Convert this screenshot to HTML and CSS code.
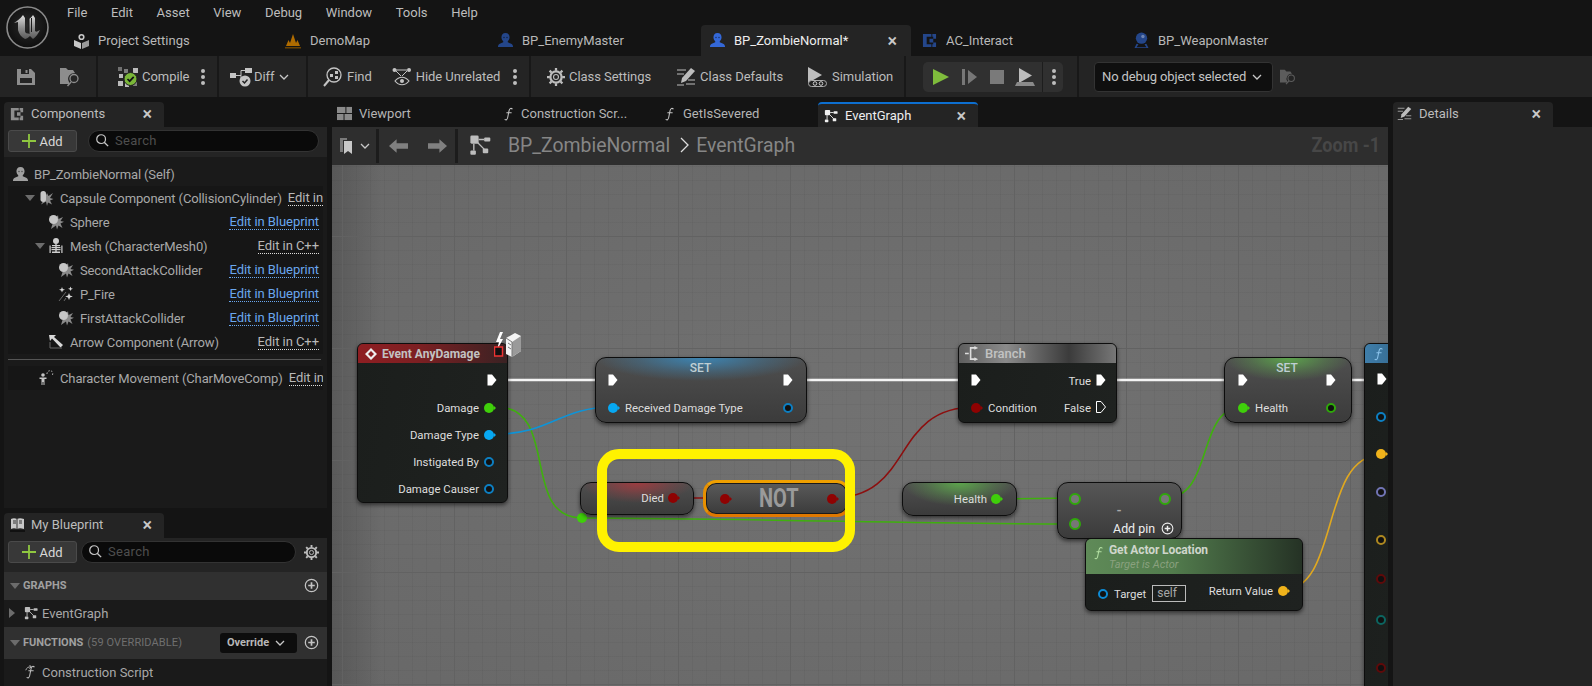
FILE: index.html
```html
<!DOCTYPE html>
<html lang="en">
<head>
<meta charset="utf-8">
<title>BP_ZombieNormal</title>
<link rel="stylesheet" href="styles.css">
</head>
<body>
<svg class="defs" width="0" height="0" aria-hidden="true">
  <defs>
    <linearGradient id="metal" x1="0" y1="0" x2="0" y2="1"><stop offset="0" stop-color="#e0e0e0"/><stop offset=".55" stop-color="#8c8c8c"/><stop offset="1" stop-color="#5a5a5a"/></linearGradient>
    <radialGradient id="logoBg" cx=".5" cy=".45" r=".6"><stop offset="0" stop-color="#2a2a2a"/><stop offset="1" stop-color="#0c0c0c"/></radialGradient>
    <symbol id="zombie" viewBox="0 0 18 18"><path fill="currentColor" d="M9 1c2.900 0 4.300 2 4.300 4.600 0 2-1 3.400-1.900 4.300v1l3.600 1.500c1.300.6 2 1.800 2 3.600H1c0-1.800.7-3 2-3.600l3.600-1.500v-1C5.700 9 4.700 7.600 4.700 5.600 4.700 3 6.100 1 9 1z"/><circle cx="7.400" cy="5.800" r=".8" fill="#0008"/><circle cx="10.600" cy="5.800" r=".8" fill="#0008"/></symbol>
    <symbol id="bpball" viewBox="0 0 18 18"><circle cx="9" cy="6.500" r="6" fill="currentColor"/><circle cx="10.500" cy="4.800" r="1.800" fill="#fff5"/><path fill="currentColor" d="M3.800 12.500l2 .6-2 3h10.400l-2-3 2-.6 2.200 4.500H1.600z"/></symbol>
    <symbol id="cicon" viewBox="0 0 16 16"><path fill="currentColor" d="M1 1h9v3H5v8h5v3H1zM11 1h4v5h-3V4h-1zM11 12h1v-2h3v5h-4zM8 6h4v4H8z"/></symbol>
    <symbol id="puff" viewBox="0 0 16 16"><path fill="#8a8a8a" d="M10 1l.5 4L15 3l-2.500 4 3.500.8-3.500 1.700 2 4.500-4-2.500-1.500 4L8 11.500 3 15l1.500-5z"/><circle cx="5.500" cy="5.500" r="4.500" fill="#c6c6c6"/></symbol>
    <symbol id="capsule" viewBox="0 0 16 16"><path fill="#8a8a8a" d="M9 3l1.500 3 4.500-3-3 5 3.500 1-3.500 1.500 2 4-4-2L9 16l-1-4.500-5 3 3-5z"/><rect x="2.500" y="1" width="5.500" height="11" rx="2.700" fill="#c6c6c6"/></symbol>
    <symbol id="skel" viewBox="0 0 16 16"><g fill="#cfcfcf"><circle cx="8" cy="3" r="3"/><rect x="4" y="7" width="8" height="1.200"/><rect x="3.500" y="9" width="9" height="1.200"/><rect x="3.500" y="11" width="9" height="1.200"/><rect x="7.300" y="6" width="1.400" height="9"/><rect x="1.500" y="7.500" width="1.200" height="7.500"/><rect x="13.300" y="7.500" width="1.200" height="7.500"/><rect x="4" y="13.500" width="8" height="1.500"/></g></symbol>
    <symbol id="spark" viewBox="0 0 16 16"><g fill="#d8d8d8"><path d="M4 1l.8 2L7 3.700 4.800 4.500 4 6.500l-.8-2L1 3.700l2.200-.7zM12.500 .5l.7 1.700 1.800.6-1.800.6-.7 1.700-.7-1.700-1.800-.6 1.800-.6zM11 7l1 2.600 2.800.9-2.800 1-1 2.500-1-2.500-2.800-1 2.800-.9z"/></g><path stroke="#666" stroke-width="1" fill="none" d="M1 15L8 6M6 15l2-3"/></symbol>
    <symbol id="arrowc" viewBox="0 0 16 16"><path fill="#d8d8d8" d="M1 1h7L6 3l9 8-2.500 2.500-8.500-9L2 7z"/><path fill="none" stroke="#666" d="M2 8v6h12"/></symbol>
    <symbol id="charm" viewBox="0 0 16 16"><g fill="#c4c4c4"><circle cx="5" cy="5" r="1.800"/><path d="M1.500 7.500h7v1.500H6.500v6H5.500v-3h-1v3h-1V9h-2z"/></g><path fill="none" stroke="#c4c4c4" stroke-dasharray="1.500 1.500" d="M9 4a3 3 0 0 1 5-2.500 3 3 0 0 1 0 4"/></symbol>
    <symbol id="graph" viewBox="0 0 16 16"><g fill="currentColor"><rect x="1" y="1" width="6" height="6" rx="1"/><rect x="11" y="2.500" width="4.500" height="3" rx=".7"/><rect x="1" y="12" width="4" height="3" rx=".7"/><rect x="10" y="10.500" width="4" height="3.500" rx=".7"/></g><path stroke="currentColor" fill="none" d="M7 4h4M3.500 7v5M6 6l5 5"/></symbol>
    <symbol id="search" viewBox="0 0 16 16"><circle cx="7" cy="7" r="5" fill="none" stroke="currentColor" stroke-width="1.400"/><path stroke="currentColor" stroke-width="1.600" d="M10.500 10.500L15 15"/></symbol>
    <symbol id="pluscircle" viewBox="0 0 16 16"><circle cx="8" cy="8" r="6.600" fill="none" stroke="currentColor" stroke-width="1.300"/><path stroke="currentColor" stroke-width="1.800" d="M4.500 8h7M8 4.500v7"/></symbol>
    <symbol id="gear" viewBox="0 0 16 16"><circle cx="8" cy="8" r="5" fill="none" stroke="currentColor" stroke-width="2"/><circle cx="8" cy="8" r="2.200" fill="none" stroke="currentColor"/><path stroke="currentColor" stroke-width="2" d="M8 0v2.500M8 13.500V16M0 8h2.500M13.500 8H16M2.300 2.300L4 4M12 12l1.700 1.700M2.300 13.700L4 12M12 4l1.700-1.700"/></symbol>
    <symbol id="folderfind" viewBox="0 0 20 20"><path fill="currentColor" d="M0 1h6l2 2h5l2 3a6 6 0 0 0-6 9 4 4 0 0 0 .5 2H0z"/><circle cx="14" cy="11.500" r="4" fill="none" stroke="currentColor" stroke-width="1.300"/><path stroke="currentColor" stroke-width="1.500" d="M11 15l-3.500 4"/></symbol>
    <symbol id="chev" viewBox="0 0 10 6"><path fill="none" stroke="currentColor" stroke-width="1.300" d="M1 1l4 4 4-4"/></symbol>
    <symbol id="edit" viewBox="0 0 20 20"><path fill="currentColor" d="M15 1l4 3-9 10-5 2 1-5z"/><path stroke="currentColor" d="M1 3h9M1 7h7M10 17h9M12 13h7M1 18h7"/></symbol>
    <symbol id="book" viewBox="0 0 16 16"><path fill="#c8c8c8" d="M1 2c2-1 4-1 6 0 2-1 4-1 7 0v10c-3-1-5-1-7 0-2-1-4-1-6 0z"/><path stroke="#333" d="M7 2v10M3 4h3M3 6h3M9 4h3M9 6h3"/><path fill="#111" d="M0 13h15v2H0z"/></symbol>
    <symbol id="fn" viewBox="0 0 14 16"><path fill="none" stroke="currentColor" stroke-width="1.200" d="M11 2.500C9 .5 7.500 2 7 4.500L5.500 12C5 14.500 3.500 15.500 2 14M4 6.500h6"/></symbol>
    <symbol id="exec" viewBox="0 0 10 12"><path fill="#fff" d="M.5.500h4.500l4.500 5.500-4.500 5.500H.500z"/></symbol>
    <symbol id="execoff" viewBox="0 0 10 12"><path fill="none" stroke="#fff" d="M.5.500h4.500l4.500 5.500-4.500 5.500H.500z"/></symbol>
  </defs>
</svg>

<header class="titlebar">
  <div class="logo">
    <svg viewBox="0 0 54 54" width="54" height="54">
      <circle cx="27.500" cy="27.500" r="20.500" fill="url(#logoBg)" stroke="#8a8a8a" stroke-width="1.600"/>
      <path fill="url(#metal)" d="M14 23c3-2 6-4 9-8l2 3v13c0 2 2 3 4 2V19c1-1 3-2 4-4l2 3v13c1 1 2 1 3 0l2-1c-2 4-4 7-7 9l-3-3c-2 2-4 3-5 3-4-2-6-5-7-9v-8z"/>
      <path stroke="#1c1c1c" stroke-width="1" fill="none" d="M29 18v16M31.500 18v14"/>
    </svg>
  </div>
  <div class="titlecol">
    <nav class="menu">
      <span>File</span><span>Edit</span><span>Asset</span><span>View</span><span>Debug</span><span>Window</span><span>Tools</span><span>Help</span>
    </nav>
    <div class="doctabs">
      <div class="doctab dt1">
        <svg class="ic16" viewBox="0 0 16 16"><circle cx="8.500" cy="4" r="2.300" fill="none" stroke="#c8c8c8" stroke-width="1.600"/><path fill="#c8c8c8" d="M1 7l7 3v6l-7-3z"/><path fill="#999" d="M16 7l-7 3v6l7-3z"/></svg>
        <span>Project Settings</span>
      </div>
      <div class="doctab dt2">
        <svg class="ic16" viewBox="0 0 16 16"><path fill="#b06c00" d="M1 13l2.500-6 1.500 3 3-9 3 9 1.500-3 2.500 6z"/><rect x="0" y="14" width="16" height="1.500" fill="#6b4300"/></svg>
        <span>DemoMap</span>
      </div>
      <div class="doctab dt3">
        <svg class="ic17 zombie-dim"><use href="#zombie"/></svg>
        <span>BP_EnemyMaster</span>
      </div>
      <div class="doctab dt4 active">
        <svg class="ic17 zombie-bright"><use href="#zombie"/></svg>
        <span class="dtname">BP_ZombieNormal*</span>
        <span class="close">×</span>
      </div>
      <div class="doctab dt5">
        <svg class="ic15 zombie-dim"><use href="#cicon"/></svg>
        <span>AC_Interact</span>
      </div>
      <div class="doctab dt6">
        <svg class="ic17 zombie-dim"><use href="#bpball"/></svg>
        <span>BP_WeaponMaster</span>
      </div>
    </div>
  </div>
</header>

<div class="toolbar">
  <div class="tg tg1">
    <svg class="ic18 tool-ic" viewBox="0 0 18 18"><path fill="currentColor" d="M0 1h14l4 4v12H0z"/><rect x="4" y="1" width="8" height="5" fill="#242424"/><rect x="8.500" y="2" width="2" height="3" fill="currentColor"/><rect x="3" y="10" width="12" height="5" fill="#242424"/></svg>
    <svg class="ic20 tool-ic"><use href="#folderfind"/></svg>
  </div>
  <div class="tg tg2">
    <div class="tb">
      <svg class="ic20" viewBox="0 0 20 20"><g fill="#bbb"><rect x="0" y="0" width="4" height="4" opacity=".5"/><rect x="6" y="2" width="4" height="4" opacity=".6"/><rect x="15" y="1" width="5" height="5"/><rect x="1" y="7" width="4" height="4"/><rect x="0" y="14" width="5" height="5"/><rect x="7" y="15" width="4" height="5"/><rect x="15" y="15" width="4" height="4" opacity=".6"/></g><circle cx="12.500" cy="12" r="6.500" fill="#7ab738" stroke="#222" stroke-width="1"/><path fill="none" stroke="#111" stroke-width="1.700" d="M9.500 12l2.200 2.200 4-4.300"/></svg>
      <span>Compile</span>
    </div>
    <i class="kebab"></i>
  </div>
  <div class="tg tg3">
    <div class="tb diff">
      <svg class="ic24" viewBox="0 0 24 20"><rect x="0" y="6" width="6" height="5" fill="#c4c4c4"/><rect x="15" y="1" width="7" height="5" fill="#c4c4c4"/><path stroke="#c4c4c4" fill="none" d="M6 8.500h5V3.500h4M11 8.500v3"/><circle cx="15" cy="14" r="5.500" fill="#c4c4c4"/><path fill="none" stroke="#222" stroke-width="1.500" d="M12.500 14l2 2 3-3.500"/></svg>
      <span>Diff</span>
      <svg class="chev"><use href="#chev"/></svg>
    </div>
  </div>
  <div class="tg tg4">
    <div class="tb">
      <svg class="ic20" viewBox="0 0 20 20"><circle cx="11" cy="8" r="7" fill="none" stroke="#c4c4c4" stroke-width="1.300"/><path stroke="#c4c4c4" stroke-width="2" d="M6 13l-5 6"/><rect x="7" y="7" width="3" height="3" fill="#c4c4c4"/><rect x="12" y="4" width="3" height="3" fill="#c4c4c4"/><rect x="12" y="9" width="3" height="3" fill="#c4c4c4"/></svg>
      <span>Find</span>
    </div>
    <div class="tb">
      <svg class="ic20" viewBox="0 0 20 20"><circle cx="2.500" cy="3" r="2" fill="#c4c4c4"/><circle cx="17" cy="3" r="2" fill="#c4c4c4"/><path stroke="#c4c4c4" d="M4 3h11M4 4l5 5M15 4l-5 5"/><path fill="none" stroke="#c4c4c4" stroke-width="1.200" d="M3 14c4-5 10-5 14 0-4 5-10 5-14 0z"/><circle cx="10" cy="14" r="2" fill="#c4c4c4"/></svg>
      <span>Hide Unrelated</span>
    </div>
    <i class="kebab"></i>
  </div>
  <div class="tg tg5">
    <div class="tb">
      <svg class="ic18 tool-lt"><use href="#gear"/></svg>
      <span>Class Settings</span>
    </div>
    <div class="tb">
      <svg class="ic20 tool-lt"><use href="#edit"/></svg>
      <span>Class Defaults</span>
    </div>
    <div class="tb">
      <svg class="ic20" viewBox="0 0 20 20"><path fill="#bdbdbd" d="M0 0l14 8-14 8z"/><rect x=".5" y="13.500" width="18" height="6" rx="3" fill="#222" stroke="#aaa"/><circle cx="7" cy="16.500" r="1.800" fill="none" stroke="#ccc"/><circle cx="13" cy="16.500" r="1.800" fill="none" stroke="#ccc"/></svg>
      <span>Simulation</span>
    </div>
  </div>
  <div class="tg tg6">
    <div class="playbox">
      <svg class="ic-play" viewBox="0 0 16 16"><path fill="#7fbc3c" d="M0 0l16 8-16 8z"/></svg>
      <svg class="ic-step" viewBox="0 0 15 16"><rect width="3" height="16" fill="#777"/><path fill="#777" d="M6 1l9 7-9 7z"/></svg>
      <span class="stop"></span>
      <svg class="ic-eject" viewBox="0 0 20 18"><path fill="#bdbdbd" d="M4 0l13 7.500L4 15z"/><path fill="#8a8a8a" d="M2 14h16l2 4H0z"/></svg>
      <span class="pdiv"></span>
      <i class="kebab"></i>
    </div>
  </div>
  <div class="tg tg7">
    <div class="debugsel"><span>No debug object selected</span><svg class="chev"><use href="#chev"/></svg></div>
    <svg class="ic16 tool-dim"><use href="#folderfind"/></svg>
  </div>
</div>

<main class="workspace">
  <aside class="leftcol">
    <section class="panel comp-panel">
      <div class="paneltab comp-tab">
        <svg class="ic14 tool-ic"><use href="#cicon"/></svg>
        <span class="pt-label">Components</span>
        <span class="close">×</span>
      </div>
      <div class="panelbody">
        <div class="searchrow comp-search">
          <button class="addbtn"><svg class="plus" viewBox="0 0 14 14"><path stroke="#8fc740" stroke-width="1.800" d="M7 0v14M0 7h14"/></svg>Add</button>
          <div class="searchbox"><svg class="ic14"><use href="#search"/></svg><span>Search</span></div>
        </div>
        <div class="tree">
          <div class="trow self">
            <svg class="ic17 selficon"><use href="#zombie"/></svg><span>BP_ZombieNormal (Self)</span>
          </div>
          <div class="trow"><i class="tri d1"></i><svg class="ic16"><use href="#capsule"/></svg><span class="tname">Capsule Component (CollisionCylinder)</span><a class="lk wt cut">Edit in</a></div>
          <div class="trow"><span class="ind2"></span><svg class="ic16"><use href="#puff"/></svg><span class="tname">Sphere</span><a class="lk bl">Edit in Blueprint</a></div>
          <div class="trow"><i class="tri d2"></i><svg class="ic16"><use href="#skel"/></svg><span class="tname">Mesh (CharacterMesh0)</span><a class="lk wt">Edit in C++</a></div>
          <div class="trow"><span class="ind3"></span><svg class="ic16"><use href="#puff"/></svg><span class="tname">SecondAttackCollider</span><a class="lk bl">Edit in Blueprint</a></div>
          <div class="trow"><span class="ind3"></span><svg class="ic16"><use href="#spark"/></svg><span class="tname">P_Fire</span><a class="lk bl">Edit in Blueprint</a></div>
          <div class="trow"><span class="ind3"></span><svg class="ic16"><use href="#puff"/></svg><span class="tname">FirstAttackCollider</span><a class="lk bl">Edit in Blueprint</a></div>
          <div class="trow"><span class="ind2"></span><svg class="ic16"><use href="#arrowc"/></svg><span class="tname">Arrow Component (Arrow)</span><a class="lk wt">Edit in C++</a></div>
          <div class="tdivider"></div>
          <div class="trow"><span class="ind1"></span><svg class="ic16"><use href="#charm"/></svg><span class="tname">Character Movement (CharMoveComp)</span><a class="lk wt cut">Edit in</a></div>
        </div>
      </div>
    </section>
    <section class="panel bp-panel">
      <div class="paneltab bp-tab">
        <svg class="ic16"><use href="#book"/></svg>
        <span class="pt-label">My Blueprint</span>
        <span class="close">×</span>
      </div>
      <div class="panelbody">
        <div class="searchrow bp-search">
          <button class="addbtn"><svg class="plus" viewBox="0 0 14 14"><path stroke="#8fc740" stroke-width="1.800" d="M7 0v14M0 7h14"/></svg>Add</button>
          <div class="searchbox sb2"><svg class="ic14"><use href="#search"/></svg><span>Search</span></div>
          <svg class="ic15 tool-lt gearbtn"><use href="#gear"/></svg>
        </div>
        <div class="secbar sb-graphs"><i class="tri sec"></i><b>GRAPHS</b><svg class="ic15 secplus"><use href="#pluscircle"/></svg></div>
        <div class="bprow br-graph"><i class="tri-r"></i><svg class="ic14 tool-lt"><use href="#graph"/></svg><span>EventGraph</span></div>
        <div class="secbar sb-func"><i class="tri sec"></i><b>FUNCTIONS</b><em>(59 OVERRIDABLE)</em><span class="override">Override<svg class="chev"><use href="#chev"/></svg></span><svg class="ic15 secplus"><use href="#pluscircle"/></svg></div>
        <div class="bprow br-cs"><svg class="ic14 tool-lt" viewBox="0 0 14 16"><use href="#fn"/><path stroke="currentColor" fill="none" d="M1 6c1-3 3-4 6-4M5 0l2.500 2L5 4"/></svg><span>Construction Script</span></div>
      </div>
    </section>
  </aside>

  <section class="center">
    <div class="gtabs">
      <div class="gtab gt1"><svg class="ic15" viewBox="0 0 16 16"><g fill="#8a8a8a"><rect x="0" y="1" width="9" height="6.500"/><rect x="10" y="1" width="6" height="6.500"/><rect x="0" y="8.500" width="7" height="6.500"/><rect x="8" y="8.500" width="8" height="6.500"/></g></svg><span>Viewport</span></div>
      <div class="gtab gt2"><svg class="ic14 fnic"><use href="#fn"/></svg><span>Construction Scr...</span></div>
      <div class="gtab gt3"><svg class="ic14 fnic"><use href="#fn"/></svg><span>GetIsSevered</span></div>
      <div class="gtab gt4 active"><svg class="ic14 white"><use href="#graph"/></svg><span class="gname">EventGraph</span><span class="close">×</span></div>
    </div>
    <div class="ghead">
      <div class="gh-book">
        <svg class="ic-book" viewBox="0 0 13 16"><path fill="#7a7a7a" d="M0 0h7v2H3v12H0z"/><path fill="#c8c8c8" d="M4 3h8v13l-4-3-4 3z"/></svg>
        <svg class="chev"><use href="#chev"/></svg>
      </div>
      <div class="gh-nav">
        <svg class="ic-arr" viewBox="0 0 20 14"><path fill="#808080" d="M0 7l8-7v4h12v6H8v4z"/></svg>
        <svg class="ic-arr" viewBox="0 0 20 14"><path fill="#808080" d="M20 7l-8-7v4H0v6h12v4z"/></svg>
      </div>
      <div class="gh-crumbs">
        <svg class="ic22"><use href="#graph"/></svg>
        <span class="crumb">BP_ZombieNormal</span>
        <svg class="crumb-sep" viewBox="0 0 9 16"><path fill="none" stroke="#ddd" stroke-width="1.300" d="M1 1l7 7-7 7"/></svg>
        <span class="crumb">EventGraph</span>
      </div>
      <span class="zoomlbl">Zoom -1</span>
    </div>
    <div class="canvas">
      <svg class="wires" viewBox="332 165 1056 521" width="1056" height="521">
        <g fill="none" stroke-width="2">
          <path class="w-exec" d="M497 380H610M790 380H975M1100 380H1240M1332 380H1382"/>
          <path class="w-green" d="M497 407C560 407 520 518 582 518"/>
          <path class="w-blue" d="M497 434C550 434 560 407 613 407"/>
          <path class="w-green w-thin" d="M582 518C800 519 900 524 1074 524"/>
          <path class="w-red" d="M673 498H723"/>
          <path class="w-red" d="M832 498C915 498 890 407 975 407"/>
          <path class="w-green" d="M996 499L1074 498"/>
          <path class="w-green" d="M1165 498C1215 498 1195 407 1243 407"/>
          <path class="w-gold" d="M1283 590C1340 590 1320 455 1381 455"/>
        </g>
      </svg>

      <div class="node impure n-event">
        <div class="nhead nh-red"><svg class="ev-ic" viewBox="0 0 12 12"><path fill="#eee" d="M6 0l6 6-6 6-6-6zM6 3L3 6l3 3 3-3z"/></svg>Event AnyDamage</div>
        <div class="nbody">
          <div class="nrow re exrow"><svg class="exec"><use href="#exec"/></svg></div>
          <div class="nrow re"><span>Damage</span><i class="pin green"></i></div>
          <div class="nrow re"><span>Damage Type</span><i class="pin blue"></i></div>
          <div class="nrow re"><span>Instigated By</span><i class="pin ring r-blue"></i></div>
          <div class="nrow re"><span>Damage Causer</span><i class="pin ring r-blue"></i></div>
        </div>
      </div>
      <div class="knot"></div>
      <svg class="cube" viewBox="0 0 28 30">
        <path fill="#fff" d="M6 0L2 10h3l-2 8 6-11H6l3-7z"/>
        <path fill="#f4f4f4" d="M12 6l9-5 6 3v15l-9 6-6-3z"/>
        <path fill="#9a9a9a" d="M18 10l9-6v15l-9 6z"/>
        <path stroke="#777" fill="none" d="M12 6l6 4v15M14 11l3 2M14 15l3 2"/>
        <rect x="0.500" y="15" width="8" height="9" fill="#111" stroke="#e33" stroke-width="1.500"/>
      </svg>

      <div class="node pure n-set1 glow-blue">
        <div class="nrow sb"><svg class="exec"><use href="#exec"/></svg><span class="nodetitle">SET</span><svg class="exec"><use href="#exec"/></svg></div>
        <div class="nrow sb"><span class="pinl"><i class="pin blue"></i><span>Received Damage Type</span></span><i class="pin ring r-blue"></i></div>
      </div>

      <div class="node pure n-died glow-red"><div class="nrow re"><span>Died</span><i class="pin red"></i></div></div>

      <div class="node pure n-not">
        <i class="pin red"></i><span class="nottxt">NOT</span><i class="pin red"></i>
      </div>

      <div class="node impure n-branch">
        <div class="nhead nh-grey"><svg class="ic15" viewBox="0 0 16 16"><path stroke="#ddd" stroke-width="1.700" fill="none" d="M0 8h4M11 2H6v12h5"/><path fill="#ddd" d="M10 0l4 2-4 2zM10 12l4 2-4 2z"/></svg>Branch</div>
        <div class="nbody">
          <div class="nrow sb"><svg class="exec"><use href="#exec"/></svg><span class="rr"><span>True</span><svg class="exec"><use href="#exec"/></svg></span></div>
          <div class="nrow sb"><span class="pinl"><i class="pin red"></i><span>Condition</span></span><span class="rr"><span>False</span><svg class="exec"><use href="#execoff"/></svg></span></div>
        </div>
      </div>

      <div class="node pure n-set2 glow-green">
        <div class="nrow sb"><svg class="exec"><use href="#exec"/></svg><span class="nodetitle">SET</span><svg class="exec"><use href="#exec"/></svg></div>
        <div class="nrow sb"><span class="pinl"><i class="pin green"></i><span>Health</span></span><i class="pin ring r-green"></i></div>
      </div>

      <div class="node pure n-health glow-green"><div class="nrow re"><span>Health</span><i class="pin green"></i></div></div>

      <div class="node pure n-minus">
        <div class="mrow"><i class="pin gring"></i><i class="pin gring"></i></div>
        <div class="mdash">-</div>
        <div class="mrow m3"><i class="pin gring"></i><span class="addpin">Add pin<svg class="ic13"><use href="#pluscircle"/></svg></span></div>
      </div>

      <div class="node impure n-gal">
        <div class="nhead nh-green">
          <svg class="fn-green"><use href="#fn"/></svg>
          <div><div class="galtitle">Get Actor Location</div><div class="galsub">Target is Actor</div></div>
        </div>
        <div class="galbody">
          <span class="pinl"><i class="pin ring r-blue2"></i><span>Target</span><span class="selfbox">self</span></span>
          <span class="rr retv"><span>Return Value</span><i class="pin gold"></i></span>
        </div>
      </div>

      <div class="node impure n-fn">
        <div class="nhead nh-blue"><svg class="fn-blue"><use href="#fn"/></svg></div>
        <div class="fnpins">
          <svg class="exec"><use href="#exec"/></svg>
          <i class="pin ring r-blue g1"></i>
          <i class="pin gold g2"></i>
          <i class="pin ring r-purple g7"></i>
          <i class="pin ring r-gold g3"></i>
          <i class="pin ring r-red g6"></i>
          <i class="pin ring r-teal g4"></i>
          <i class="pin ring r-red g5"></i>
        </div>
      </div>

      <div class="highlight"></div>
    </div>
  </section>

  <aside class="rightcol">
    <div class="paneltab det-tab">
      <svg class="ic15 tool-lt"><use href="#edit"/></svg>
      <span class="pt-label">Details</span>
      <span class="close">×</span>
    </div>
    <div class="panelbody det-body"></div>
  </aside>
</main>
</body>
</html>
```
FILE: styles.css
```css
*{box-sizing:border-box}
html,body{margin:0;height:100%}
body{width:1592px;height:686px;overflow:hidden;background:#141414;font-family:Roboto,"Liberation Sans",sans-serif;font-size:13px;color:#c0c0c0;display:flex;flex-direction:column}
.defs{position:absolute}
svg{display:block;flex:none}
.ic13{width:13px;height:13px}.ic14{width:14px;height:14px}.ic15{width:15px;height:15px}.ic16{width:16px;height:16px}.ic17{width:17px;height:17px}.ic18{width:18px;height:18px}.ic20{width:20px;height:20px}.ic22{width:22px;height:22px}.ic24{width:24px;height:20px}
.close{font-size:18px;line-height:1;font-weight:500;color:#c8c8c8}

/* title bar */
.titlebar{display:flex;height:56px;flex:none;background:#141414}
.logo{width:60px;flex:none}
.titlecol{flex:1;display:flex;flex-direction:column}
.menu{display:flex;height:25px;align-items:center;padding-left:7px}
.menu span{margin-right:23.6px;color:#bdbdbd}
.doctabs{display:flex;height:31px}
.doctab{display:flex;align-items:center;gap:9px;padding-left:13px;height:31px;color:#b8b8b8}
.dt1{width:212px}.dt2{width:212px}.dt3{width:217px;gap:8px}.dt4{width:210px;padding-left:8px;gap:8px}.dt5{width:211px;padding-left:11px}.dt6{width:200px;padding-left:11px;gap:8px}
.doctab.active{background:#242424;border-radius:4px 4px 0 0;color:#eee;padding-right:14px}
.dtname{flex:1}
.zombie-dim{color:#24468a}
.zombie-bright{color:#3468d8}

/* toolbar */
.toolbar{display:flex;height:41px;flex:none;background:#242424;align-items:center}
.tg{display:flex;align-items:center;height:41px;border-right:2px solid #181818;flex:none}
.tg1{width:98px;padding-left:17px;gap:25px}
.tool-ic{color:#8d8d8d}
.tool-lt{color:#bdbdbd}
.tool-dim{color:#5c5c5c}
.tg2{width:121px;padding-left:20px;gap:12px}
.tg3{width:89px;padding-left:11px}
.tg4{width:223px;padding-left:15px;gap:20px}
.tg4 .kebab{margin-left:-7px}
.tg5{width:375px;padding-left:16px;gap:25px}
.tg6{width:173px;padding-left:17px;padding-right:14px}
.tg7{border-right:0;padding-left:15px;gap:7px}
.tb{display:flex;align-items:center;gap:4px;color:#bcbcbc;letter-spacing:-.05px}
.diff{gap:0}
.chev{width:10px;height:6px;color:#c8c8c8}
.diff .chev{margin-left:4px}
.kebab{display:block;width:4px;height:4px;border-radius:50%;background:#bdbdbd;box-shadow:0 -6px 0 #bdbdbd,0 6px 0 #bdbdbd;flex:none}
.playbox{display:flex;align-items:center;height:30px;width:140px;background:#303030;border-radius:5px;padding-left:10px}
.ic-play{width:16px;height:16px}
.ic-step{width:15px;height:16px;margin-left:13px}
.stop{width:14px;height:14px;background:#7a7a7a;margin-left:13px;flex:none}
.ic-eject{width:20px;height:18px;margin-left:11px}
.pdiv{width:1px;height:30px;background:#1d1d1d;margin-left:7px}
.playbox .kebab{margin-left:9px}
.debugsel{display:flex;align-items:center;height:30px;width:179px;background:#0f0f0f;border:1px solid #333;border-radius:4px;padding-left:7px;gap:6px;color:#c4c4c4;letter-spacing:-.12px}

/* workspace */
.workspace{flex:1;display:flex;min-height:0}
.leftcol{width:323px;margin-left:4px;margin-right:5px;display:flex;flex-direction:column;flex:none}
.panel{display:flex;flex-direction:column;padding-top:5px}
.comp-panel{height:411px}
.bp-panel{flex:1;min-height:0;overflow:hidden}
.paneltab{height:25px;background:#242424;border-radius:4px 4px 0 0;display:flex;align-items:center;padding:0 12px 2px 6px;flex:none}
.comp-tab{width:160px}
.bp-tab{width:160px}
.bp-tab .pt-label{margin-left:5px}
.pt-label{flex:1;margin-left:7px;color:#bcbcbc}
.panelbody{flex:1;background:#242424;min-height:0}
.searchrow{display:flex;align-items:flex-start;padding:3px 0 0 4px;height:30px}
.addbtn{display:flex;align-items:center;gap:3px;justify-content:center;height:22px;width:69px;background:#383838;border:1px solid #4a4a4a;border-radius:3px;color:#d8d8d8;font:13px Roboto,sans-serif;padding:0}
.plus{width:14px;height:14px}
.searchbox{display:flex;align-items:center;gap:6px;height:22px;margin-left:11px;width:231px;background:#0a0a0a;border:1px solid #333;border-radius:11px;padding:0 0 2px 6px;color:#c8c8c8}
.searchbox span{color:#4e4e4e;letter-spacing:.3px}
.sb2{margin-left:4px;width:215px}
.gearbtn{margin:4px 0 0 8px;width:15px;height:15px}

.tree{background:#1a1a1a;height:351px;padding:0 4px;overflow:hidden}
.trow{display:flex;align-items:center;height:24px;width:315px;background:#161616;white-space:nowrap;overflow:hidden;color:#a8a8a8;letter-spacing:-.12px}
.trow.self{background:none;margin-top:5px;padding-left:4px}
.trow.self span{margin-left:5px}
.selficon{color:#a0a0a0}
.tname{margin-left:6px;flex:1}
.tri{width:0;height:0;border-left:5px solid transparent;border-right:5px solid transparent;border-top:6px solid #6c6c6c;flex:none}
.tri.d1{margin-left:17px;margin-right:3px}
.tri.d2{margin-left:27px;margin-right:3px}
.ind1{width:30px;flex:none}.ind2{width:40px;flex:none}.ind3{width:50px;flex:none}
.lk{flex:none;border-bottom:1px dotted;margin-right:4px;line-height:14px;letter-spacing:-.05px}
.lk.bl{color:#6aa7ee;border-color:#6aa7ee}
.lk.wt{color:#b8b8b8;border-color:#ddd}
.cut{margin-left:6px;margin-right:0}
.tdivider{height:1px;background:#555;margin:5px 1px 6px 0;width:313px}

.secbar{display:flex;align-items:center;background:#303030;padding:0 0 1px 6px;color:#aaa;font-size:11px}
.secbar b{font-weight:700;margin-left:3px;color:#a0a0a0}
.secbar em{font-style:normal;margin-left:4px;color:#6f6f6f;letter-spacing:.1px}
.sb-graphs{height:28px;margin-top:4px}
.sb-func{height:32px}
.secplus{margin-left:auto;margin-right:8px;color:#c4c4c4}
.override{display:flex;align-items:center;gap:6px;height:20px;width:77px;padding-left:7px;background:#0d0d0d;border-radius:3px;margin-left:auto;color:#b8b8b8;font-weight:700;font-size:11px}
.sb-func .secplus{margin-left:7px}
.bprow{display:flex;align-items:center;background:#1a1a1a;color:#a8a8a8;gap:4px;height:27px;padding-bottom:1px}
.br-graph{padding-left:5px}
.br-cs{padding-left:20px}
.tri-r{width:0;height:0;border-top:5px solid transparent;border-bottom:5px solid transparent;border-left:6px solid #6c6c6c;margin-right:5px}

/* graph */
.center{width:1056px;flex:none;display:flex;flex-direction:column;min-height:0}
.gtabs{display:flex;height:30px;padding-top:5px;flex:none}
.gtab{display:flex;align-items:center;gap:7px;height:25px;padding:0 0 2px 5px;color:#b4b4b4}
.gt1{width:165px}.gt2{width:161px;gap:5px}.gt3{width:160px;gap:6px}
.fnic{color:#c4c4c4}
.gt4{width:160px;background:#242424;border-radius:4px 4px 0 0;border-top:2px solid #0d6fd0;color:#eee;padding:0 12px 0 6px}
.gname{flex:1}
.white{color:#f0f0f0}
.ghead{display:flex;align-items:center;height:38px;flex:none;background:#2e2e2e;color:#8a8a8a}
.gh-book{display:flex;align-items:center;gap:7px;width:47px;height:34px;padding-left:8px;border-right:3px solid #1c1c1c}
.ic-book{width:13px;height:16px}
.gh-nav{display:flex;align-items:center;gap:20px;width:79px;height:34px;padding-left:10px;border-right:3px solid #1c1c1c}
.ic-arr{width:19px;height:14px}
.gh-crumbs{display:flex;align-items:center;padding:0 0 2px 11px;color:#bdbdbd}
.gh-crumbs .ic22{margin-right:17px}
.crumb{font-size:19.4px;color:#868686}
.crumb-sep{width:9px;height:16px;margin:0 7px 0 10px}
.zoomlbl{margin-left:auto;margin-right:8px;font-size:20px;font-weight:700;color:#474747;transform:scaleX(.9);transform-origin:right center;padding-bottom:2px}

.canvas{position:relative;flex:1;overflow:hidden;min-height:0;
  background-color:#6b6b6b;
  background-image:
    repeating-linear-gradient(90deg,transparent 0 10px,#626262 10px 11px,transparent 11px 112px),
    repeating-linear-gradient(0deg,transparent 0 1px,#626262 1px 2px,transparent 2px 112px),
    repeating-linear-gradient(90deg,transparent 0 10px,rgba(0,0,0,.035) 10px 11px,transparent 11px 14px),
    repeating-linear-gradient(0deg,transparent 0 1px,rgba(0,0,0,.035) 1px 2px,transparent 2px 14px),
    linear-gradient(90deg,rgba(0,0,0,.16),transparent 50px),
    radial-gradient(ellipse at 55% 50%,#727272 0,#686868 100%)}
.wires{position:absolute;left:0;top:0}
.w-exec{stroke:#f5f5f5;stroke-width:2.400}
.w-green{stroke:#3fb00e;stroke-width:1.600}
.w-thin{stroke-width:1.400}
.w-blue{stroke:#0e94d8;stroke-width:1.600}
.w-red{stroke:#8c0f0f;stroke-width:1.600}
.w-gold{stroke:#e0a820;stroke-width:1.600}

.node{position:absolute;border:1px solid #0d0d0d;box-shadow:0 2px 4px rgba(0,0,0,.55);font-size:11.4px;color:#ddd}
.impure{background:linear-gradient(100deg,#1b1e1c,#1f2220);border-radius:6px;overflow:hidden}
.pure{background:linear-gradient(#565656,#3b3b3b);border-radius:11px}
.nhead{display:flex;align-items:center;height:19px;gap:3px;padding-left:6px;font-weight:700;font-size:12px;color:#c2c2c2}
.nh-red{background:linear-gradient(90deg,#8e1e22,#7d1f22 40%,#3a2223)}
.nh-grey{background:linear-gradient(90deg,#5e5e5e,#8a8a8a 30%,#3b3b3b 70%,#777);font-weight:500;font-size:13px;gap:5px}
.nh-green{height:35px;padding:4px 0 0 7px;gap:4px;background:linear-gradient(90deg,#5f8a58,#527c4d 40%,#253225);align-items:flex-start}
.nh-blue{background:linear-gradient(90deg,#3f7eaa,#2d5a7a);padding-left:8px}
.ev-ic{width:12px;height:12px;margin-left:1px;margin-right:2px}
.nbody{padding-top:4px}
.nrow{display:flex;align-items:center;height:27px;gap:5px}
.re{justify-content:flex-end;padding-right:13px}
.exrow{padding-right:10px}
.sb{justify-content:space-between;padding:0 13px 0 12px}
.pinl{display:flex;align-items:center;gap:7px}
.rr{display:flex;align-items:center;gap:6px}
.exec{width:10px;height:12px;margin-top:-1px}
.pin{display:block;width:10px;height:10px;border-radius:50%;flex:none;position:relative}
.pin::after{content:"";position:absolute;left:100%;top:50%;margin-top:-2px;border-left:2px solid;border-top:2px solid transparent;border-bottom:2px solid transparent;border-left-color:inherit}
.green{background:#3fcf0a;border-color:#3fcf0a}
.blue{background:#07a8f2;border-color:#07a8f2}
.red{background:#8f0202;border-color:#8f0202}
.gold{background:#f0b31b;border-color:#f0b31b}
.ring{background:#111;border:2px solid}
.r-blue{border-color:#0d7fc2}
.r-blue2{border-color:#0d8ad4}
.r-green{border-color:#2fa80a}
.r-purple{border-color:#7174b4}
.r-gold{border-color:#ae8820}
.r-red{border-color:#5e0a0a}
.r-teal{border-color:#0c6560}
.gring{width:12px;height:12px;background:#777;border:2px solid #2fa80a}
.gring::after{display:none}
.nodetitle{align-self:flex-start;margin-top:-6px;font-weight:500;font-size:12px;color:#bfcfd4;line-height:14px}
.glow-blue{background:radial-gradient(ellipse 50% 100% at 50% 0,#3c84b2,rgba(60,132,178,.35) 60%,transparent) no-repeat 0 0/100% 23px,linear-gradient(#4f4f4f,#3b3b3b)}
.glow-green{background:radial-gradient(ellipse 50% 100% at 50% 0,#5ca34c,rgba(92,163,76,.35) 60%,transparent) no-repeat 0 0/100% 23px,linear-gradient(#4f4f4f,#3b3b3b)}
.glow-red{background:radial-gradient(ellipse 50% 100% at 50% 0,#9c3c40,rgba(156,60,64,.35) 60%,transparent) no-repeat 0 0/100% 20px,linear-gradient(#4f4f4f,#3b3b3b)}

.n-event{left:25px;top:178px;width:151px;height:160px}
.knot{position:absolute;left:245px;top:348px;width:10px;height:10px;border-radius:50%;background:#3fcf0a}
.n-set1{left:263px;top:192px;width:212px;height:66px;padding-top:9px}
.n-died{left:248px;top:317px;width:114px;height:33px;padding-top:2px}
.n-died .nrow{height:26px;gap:4px;padding-right:15px}
.n-not{left:371px;top:315px;width:147px;height:37px;background:linear-gradient(#5a5a5a,#3b3b3b);border:3px solid;border-color:#f0a000 #e89000 #e07800;border-radius:13px;box-shadow:inset 0 0 0 1px #1a1a1a;display:flex;align-items:center;justify-content:space-between;padding:0 10px 0 14px}
.nottxt{font-size:25px;font-weight:700;color:#9a9a9a;transform:scaleX(.8);line-height:1}
.n-branch{left:626px;top:178px;width:159px;height:80px}
.n-branch .sb{padding:0 10px 0 12px}
.n-branch .rr{gap:5px}
.n-set2{left:892px;top:192px;width:128px;height:66px;padding-top:9px}
.n-set2 .sb{padding:0 15px 0 13px}
.n-health{left:570px;top:317px;width:115px;height:34px;padding-top:3px}
.n-health .nrow{height:26px;gap:4px;padding-right:15px}
.n-minus{left:725px;top:317px;width:125px;height:57px;padding:8px 10px 0 11px}
.mrow{display:flex;justify-content:space-between;height:15px;align-items:center}
.mdash{height:10px;line-height:10px;text-align:center;color:#aaa;font-weight:700;font-size:13px;padding-right:2px}
.m3{height:22px;align-items:flex-start;padding-top:2px}
.addpin{display:flex;align-items:center;gap:6px;color:#eee;font-size:12.4px;margin-top:3px;margin-right:-3px}
.n-gal{left:753px;top:373px;width:218px;height:73px}
.fn-green{width:12px;height:16px;margin-top:2px;color:#b4e0a4}
.galtitle{font-weight:700;font-size:12px;line-height:14px;color:#cfd6cb;letter-spacing:-.1px}
.galsub{font-style:italic;font-weight:400;font-size:11px;line-height:15px;color:#8aa17f}
.galbody{display:flex;justify-content:space-between;padding:9px 14px 0 12px;align-items:flex-start}
.galbody .pinl{gap:6px;margin-top:2px}
.selfbox{border:1px solid #bbb;width:34px;height:17px;line-height:15px;padding-left:4px;color:#a8a8a8;font-size:12px}
.retv{gap:5px;padding-top:1px}
.n-fn{left:1032px;top:178px;width:60px;height:520px}
.fn-blue{width:12px;height:16px;color:#8cc4ec}
.fnpins{display:flex;flex-direction:column;padding-left:11px;padding-top:11px}
.fnpins .exec{margin-left:1px}
.g1{margin-top:27px}.g2{margin-top:27px}.g7{margin-top:28px}.g3{margin-top:38px}.g6{margin-top:29px}.g4{margin-top:31px}.g5{margin-top:38px}
.cube{position:absolute;left:162px;top:167px;width:28px;height:30px}
.highlight{position:absolute;left:265px;top:284px;width:258px;height:103px;border:10px solid #fff200;border-radius:22px;pointer-events:none}

/* right */
.rightcol{width:199px;flex:none;margin-left:5px;display:flex;flex-direction:column;padding-top:5px}
.det-tab{width:160px;padding:0 12px 2px 4px}
```
